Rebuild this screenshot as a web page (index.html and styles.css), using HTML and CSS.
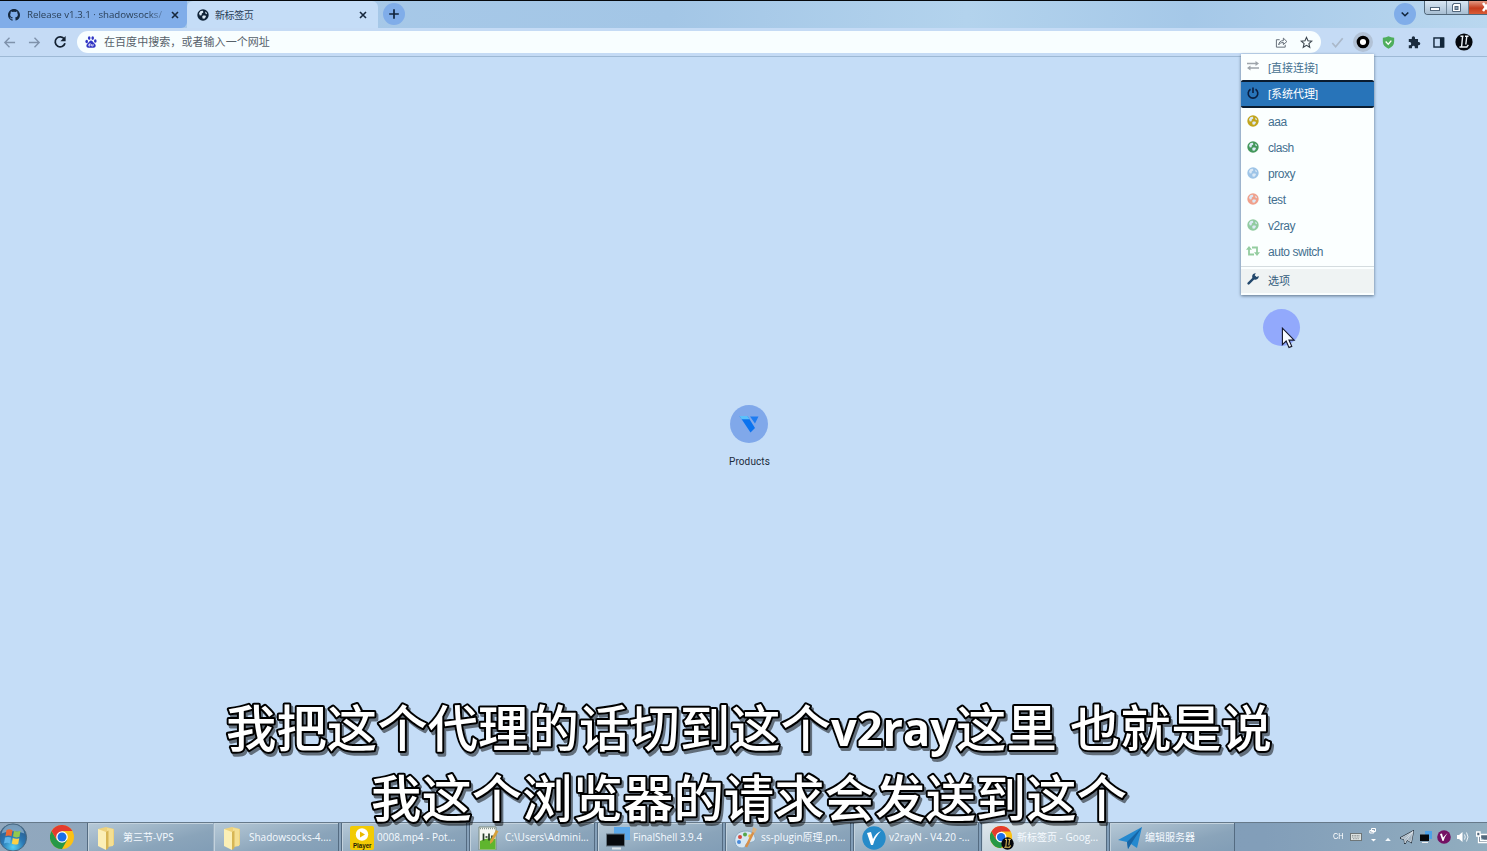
FILE: index.html
```html
<!DOCTYPE html>
<html lang="zh-CN">
<head>
<meta charset="utf-8">
<title>新标签页</title>
<link rel="stylesheet" href="styles.css">
</head>
<body>
<svg class="defs" aria-hidden="true">
  <defs>
    <symbol id="globe" viewBox="0 0 12 12"><circle cx="6" cy="6" r="5.7" fill="currentColor"/><path class="land" d="M2 4.200 3.600 2 6 1.800 6.300 3.400 4.800 4.600 4.600 6.200 2.800 6.400ZM8 2.400 9.800 3.800 9.900 5.200 8.600 4.800ZM6 6.600 8.400 6.500 9 7.800 7.400 9.800 5.600 9.400 5.200 7.600Z"/></symbol>
    <symbol id="close" viewBox="0 0 8 8"><path d="M1 1 7 7M7 1 1 7" stroke="#17283c" stroke-width="1.6"/></symbol>
    <symbol id="folder" viewBox="0 0 20 24"><path d="M2 3 10 1l8 2v16l-8 2-8-2Z" fill="#eed27c"/><path d="M11 2l6 1v17l-6 1Z" fill="#f4df92"/><path d="M2 3 10 6v18l-8-4Z" fill="#fbefb6"/><path d="M10 6l2.500-1.500V22L10 24Z" fill="#d7b654"/></symbol>
    <symbol id="chrome" viewBox="0 0 24 24"><circle cx="12" cy="12" r="12" fill="#fbc116"/><path d="M1.600 6A12 12 0 0 0 12 24L17.200 15 12 12 6.800 15Z" fill="#279847"/><path d="M1.600 6A12 12 0 0 1 22.400 6H12L6.800 15Z" fill="#e33b2e"/><circle cx="12" cy="12" r="5.800" fill="#fff"/><circle cx="12" cy="12" r="4.500" fill="#1b6fe8"/></symbol>
    <symbol id="lbadge" viewBox="0 0 18 18"><circle cx="9" cy="9" r="8.600" fill="#05080d"/><path d="M5.500 3.200h3M7.600 3.200 6.600 13.600M4.400 14h7.400l1.600-2.200M11.800 3.200 10.800 11.500M10 3.200h3.500" stroke="currentColor" stroke-width="1.400" fill="none"/></symbol>
  </defs>
</svg>

<div class="tabstrip">
  <div class="tab tab-back">
    <svg class="github" viewBox="0 0 16 16"><path d="M8 0C3.58 0 0 3.58 0 8c0 3.54 2.29 6.53 5.47 7.59.4.07.55-.17.55-.38v-1.49c-2.23.49-2.69-1.07-2.69-1.07-.36-.92-.89-1.17-.89-1.17-.73-.5.06-.49.06-.49.8.06 1.23.83 1.23.83.71 1.23 1.87.87 2.33.66.07-.52.28-.87.5-1.07-1.77-.2-3.64-.89-3.64-3.95 0-.87.31-1.59.82-2.15-.08-.2-.36-1.02.08-2.12 0 0 .67-.22 2.2.82a7.4 7.4 0 0 1 4 0c1.53-1.04 2.2-.82 2.2-.82.44 1.1.16 1.92.08 2.12.51.56.82 1.27.82 2.15 0 3.07-1.87 3.75-3.65 3.95.29.25.54.73.54 1.48v2.2c0 .21.15.46.55.38A8 8 0 0 0 16 8c0-4.42-3.58-8-8-8Z" fill="#14283f"/></svg>
    <span class="tab-title fade">Release v1.3.1 · shadowsocks/</span>
    <svg class="x"><use href="#close"/></svg>
  </div>
  <div class="tab tab-active">
    <svg class="tab-globe"><use href="#globe"/></svg>
    <span class="tab-title cn">新标签页</span>
    <svg class="x"><use href="#close"/></svg>
  </div>
  <div class="new-tab"><svg viewBox="0 0 22 22"><path d="M11 6.2v9.6M6.2 11h9.6" stroke="#10243c" stroke-width="1.7"/></svg></div>
  <div class="tab-search"><svg viewBox="0 0 22 22"><path d="m7.7 9.5 3.3 3.2 3.3-3.2" stroke="#10243c" stroke-width="1.6" fill="none"/></svg></div>
  <div class="window-buttons">
    <span class="wb"><svg viewBox="0 0 22 13"><rect x="6.500" y="6.500" width="9" height="3" fill="#fff" stroke="#52677c"/></svg></span>
    <span class="wb wb-max"><svg viewBox="0 0 22 13"><path d="M7.500 2.500h7v8h-8v-7h1Z" fill="#fff" stroke="#52677c"/><rect x="9" y="5.500" width="3" height="3" fill="#8aa1b7" stroke="#52677c"/></svg></span>
    <span class="wb wb-close"><svg viewBox="0 0 22 13"><path d="m15 2 6 8m0-8-6 8" stroke="#fff" stroke-width="2.500"/></svg></span>
  </div>
</div>

<div class="toolbar">
  <svg class="nav" viewBox="0 0 14 14"><path d="M13 7H2M7 2 2 7l5 5" stroke="#7f92ab" stroke-width="1.500" fill="none"/></svg>
  <svg class="nav fwd" viewBox="0 0 14 14"><path d="M1 7h11M7 2l5 5-5 5" stroke="#7f92ab" stroke-width="1.500" fill="none"/></svg>
  <svg class="nav reload" viewBox="0 0 14 14"><path d="M11.300 4A5 5 0 1 0 12 8.300" stroke="#132132" stroke-width="1.800" fill="none"/><path d="M12.600 1v5.200H7.400Z" fill="#132132"/></svg>
  <div class="omnibox">
    <svg class="baidu" viewBox="0 0 12 12"><g fill="#3035c4"><ellipse cx="1.700" cy="5.500" rx="1.300" ry="1.700"/><ellipse cx="4.200" cy="2.100" rx="1.300" ry="1.800"/><ellipse cx="7.700" cy="2.100" rx="1.300" ry="1.800"/><ellipse cx="10.300" cy="5" rx="1.300" ry="1.700"/><path d="M6 4.500c1.500 0 2 1.500 3 2.500 1.500 1.300 2 2.200 1.500 3.500-.5 1.500-2.500 1.200-4.500 1.200s-4 .3-4.500-1.200c-.5-1.300.3-2.500 1.500-3.500S4.500 4.500 6 4.500Z"/></g><path d="M5 7v3H3.800V8.500H5M6.600 8v2h1.500V8" stroke="#fff" stroke-width=".7" fill="none"/></svg>
    <span class="placeholder">在百度中搜索，或者输入一个网址</span>
    <svg class="share" viewBox="0 0 14 14"><path d="M5 4H1.500v8h9.500V9.500M4 9.500C4.300 6.500 6 5 9 5V2.300L12.800 6 9 9.200V7C6.500 7 5 7.800 4 9.500Z" stroke="#5c6670" fill="none"/></svg>
    <svg class="star" viewBox="0 0 14 14"><path d="m7 1.500 1.600 3.700 4 .4-3 2.600.9 3.900L7 10l-3.500 2.100.9-3.900-3-2.600 4-.4Z" stroke="#3e4850" stroke-width="1.200" fill="none"/></svg>
  </div>
  <div class="extensions">
    <svg viewBox="0 0 18 18"><path d="m3.500 9.500 3.500 4 7.500-9" stroke="#aab8c9" stroke-width="1.800" fill="none"/></svg>
    <svg class="omega" viewBox="0 0 20 20"><circle cx="10" cy="10" r="10" fill="#b2c2d6"/><circle cx="10" cy="10" r="4.700" fill="#fff" stroke="#000" stroke-width="3.300"/></svg>
    <svg viewBox="0 0 18 18"><path d="M3 4q3.500 0 6-1.500Q11.500 4 15 4v4q0 5-6 7.500Q3 13 3 8Z" fill="#4fae5c"/><path d="m6 8 2.700 2.800L12 7" stroke="#fff" stroke-width="1.400" fill="none"/></svg>
    <svg viewBox="0 0 18 18"><path d="M4 5.200h3.200V4a1.700 1.700 0 0 1 3.400 0v1.200h3.200v3.200h.7a1.700 1.700 0 0 1 0 3.400h-.7V15h-3.400v-1a1.500 1.500 0 0 0-3 0v1H4v-3.200h1a1.600 1.600 0 0 0 0-3.200H4Z" fill="#1a2b3d"/></svg>
    <svg viewBox="0 0 18 18"><rect x="4.200" y="4.200" width="10.200" height="9.600" fill="none" stroke="#12263a" stroke-width="1.500"/><path d="M10.500 4H15v10h-4.500Z" fill="#12263a"/></svg>
    <svg class="avatar"><use href="#lbadge"/></svg>
  </div>
</div>

<main class="newtab">
  <div class="shortcut">
    <svg viewBox="0 0 38 38"><circle cx="19" cy="19" r="19" fill="#80a8ea"/><path d="M9.500 11h8l7.500 12-4.500 4.500Z" fill="#0b73ef"/><path d="M9.500 11h8l2 3.200h-8Z" fill="#5cc0fa"/><path d="M20 11.500h8.500L25 18.500Z" fill="#1e7cf1"/></svg>
    <span>Products</span>
  </div>
</main>

<div class="popup">
  <div class="item"><svg viewBox="0 0 12 12"><path d="M0 3.500h9M3 8h9" stroke="#9da4aa" stroke-width="1.600"/><path d="m8.500 1 3.500 2.500L8.500 6ZM3.500 5.500 0 8l3.500 2.500Z" fill="#9da4aa"/></svg><span>[直接连接]</span></div>
  <div class="item selected"><svg viewBox="0 0 12 12"><path d="M3.500 2.200a4.800 4.800 0 1 0 5 0M6 .5V6" stroke="#0a1f42" stroke-width="1.600" fill="none"/></svg><span>[系统代理]</span></div>
  <div class="item c-aaa"><svg><use href="#globe"/></svg><span>aaa</span></div>
  <div class="item c-clash"><svg><use href="#globe"/></svg><span>clash</span></div>
  <div class="item c-proxy"><svg><use href="#globe"/></svg><span>proxy</span></div>
  <div class="item c-test"><svg><use href="#globe"/></svg><span>test</span></div>
  <div class="item c-v2ray"><svg><use href="#globe"/></svg><span>v2ray</span></div>
  <div class="item"><svg class="retweet" viewBox="0 0 14 12"><path d="M3 4v5.500h5M6 2.500h5V8" stroke="#94cda0" stroke-width="1.800" fill="none"/><path d="M3 1 6 4.800H0ZM11 11 8 7.200h6Z" fill="#94cda0"/></svg><span>auto switch</span></div>
  <div class="item options"><svg viewBox="0 0 12 12"><path d="m1.600 10.400 6-6" stroke="#23486c" stroke-width="2.400" stroke-linecap="round"/><path d="M11.700 3A3.300 3.300 0 1 1 8.800.2L7.700 2.200 9.600 4Z" fill="#23486c"/></svg><span>选项</span></div>
</div>

<div class="pointer"><svg viewBox="0 0 16 24"><path d="M1.500 1v17.500l4-3.800 3 7 3-1.300-3-6.700H14Z" fill="#f8fbff" stroke="#15182a" stroke-width="1.200"/></svg></div>

<footer class="taskbar">
  <svg class="start" viewBox="0 0 29 29"><defs><radialGradient id="orb" cx=".5" cy=".85" r=".8"><stop offset="0" stop-color="#56d0f5"/><stop offset=".5" stop-color="#2b78b4"/><stop offset="1" stop-color="#2c5a88"/></radialGradient></defs><circle cx="13" cy="14.500" r="13.600" fill="url(#orb)" stroke="#46677f"/><path d="M1.500 10.500Q4 1.500 13 1.500T24.500 10.500Q13 6 1.500 10.500Z" fill="#c2dbea" opacity=".5"/><path d="M6.500 7q3-1.500 6 .2l-1 6q-3-1.400-6 0Z" fill="#ea6a35"/><path d="M14 7.800q3 1.500 6.500 0l-1 6q-3.500 1.300-6.500-.2Z" fill="#93c84f"/><path d="M5 14.600q3-1.300 6 0l-1 5.800q-3-1.300-6 .1Z" fill="#5fb6ea"/><path d="M12.800 15q3.200 1.400 6.400.2l-1 5.800q-3.300 1.300-6.400-.2Z" fill="#fdd045"/></svg>
  <svg class="pinned"><use href="#chrome"/></svg>
  <div class="tasks">
    <div class="task joined"><svg class="f"><use href="#folder"/></svg><span>第三节-VPS</span></div>
    <div class="task joined-end"><svg class="f"><use href="#folder"/></svg><span>Shadowsocks-4....</span></div>
    <div class="task"><svg viewBox="0 0 24 24"><rect width="24" height="24" rx="2" fill="#f2cb05"/><circle cx="12" cy="8.500" r="6.200" fill="#fff"/><path d="m10 5.500 5 3-5 3Z" fill="#eab900"/><text x="3" y="22.300" textLength="18.500" lengthAdjust="spacingAndGlyphs" class="player">Player</text></svg><span>0008.mp4 - Pot...</span></div>
    <div class="task"><svg viewBox="0 0 24 24"><path d="M1 1h17v23H1Z" fill="#f5f8f2" stroke="#7b8a80"/><path d="M2 15q7-4 15.500-2v10.500H2Z" fill="#5fb52e"/><path d="M5.500 7.500v7M7.500 11h2M11 7.500v7M14 9.500v5" stroke="#243a25" stroke-width="1.700"/><path d="m12 15 6-11 2.500 1.300-6 10.700-2.500 2Z" fill="#d6a13b"/><path d="M2 2.500h15" stroke="#8c9993" stroke-width="1.500" stroke-dasharray="1 1"/></svg><span>C:\Users\Admini...</span></div>
    <div class="task"><svg viewBox="0 0 24 24"><rect x="8" y="1" width="16" height="13" fill="#5da9eb"/><rect x=".5" y="8" width="18" height="12" fill="#07090d" stroke="#647581"/><path d="M6 22.500h9" stroke="#dfe7ec" stroke-width="2"/></svg><span>FinalShell 3.9.4</span></div>
    <div class="task"><svg viewBox="0 0 24 24"><path d="M12 5C4 5 0 10 1 16q1 6 7 6c5 0 2-4 6-5 7-1 8-3 7-6-1-4-4-6-9-6Z" fill="#d8e7f2" stroke="#8baac2"/><circle cx="6" cy="11" r="2" fill="#d64b42"/><circle cx="11" cy="8.500" r="2" fill="#55a64c"/><circle cx="5" cy="16" r="2" fill="#4889db"/><circle cx="16" cy="10" r="1.800" fill="#e8c13a"/><path d="m12 21 8-16" stroke="#d9904a" stroke-width="2.500"/><path d="m18 6 1-5 4 2-2 4Z" fill="#d8b486"/></svg><span>ss-plugin原理.pn...</span></div>
    <div class="task"><svg viewBox="0 0 24 24"><circle cx="12" cy="12" r="11.700" fill="#268bc9"/><path d="m5 7 4-1 2 7q3-6 8-8-6 6-8 14H9Z" fill="#fff"/></svg><span>v2rayN - V4.20 -...</span></div>
    <div class="task active"><svg viewBox="0 0 26 26"><use href="#chrome" width="24" height="24"/><g color="#e2c15a"><use href="#lbadge" x="12" y="12" width="14" height="14"/></g></svg><span>新标签页 - Goog...</span></div>
    <div class="task"><svg viewBox="0 0 24 24"><path d="M0 14 24 1 19 22l-6-4-3 5-1-7Z" fill="#2589cf"/><path d="m9 16 15-15-11 17-3 5Z" fill="#1765a5"/></svg><span>编辑服务器</span></div>
  </div>
  <div class="tray">
    <span class="lang">CH</span>
    <svg class="kbd" viewBox="0 0 12 8"><rect x=".5" y=".5" width="11" height="7" fill="#dde2e0" stroke="#6e7678"/><path d="M2 2.500h8M2 4h8M3 5.700h6" stroke="#7c8385" stroke-width=".8" stroke-dasharray="1 .6"/></svg>
    <svg class="restore" viewBox="0 0 8 16"><path d="M2.500 1.500h4v3h-4ZM.8 3.500h4v2.500h-4Z" fill="#8da1b5" stroke="#fff"/><path d="M2 12h5l-2.500 2.500Z" fill="#fff"/></svg>
    <svg class="up" viewBox="0 0 7 5"><path d="M0 5h7L3.500 1Z" fill="#f2f8fc"/></svg>
    <svg class="plane" viewBox="0 0 14 14"><path d="M1 8 13 1.500l-2 10.500-4-2.500L5 13 4.500 9ZM4.500 9 13 1.500 7 9.500" fill="none" stroke="#26313c" stroke-width="2"/><path d="M1 8 13 1.500l-2 10.500-4-2.500L5 13 4.500 9ZM4.500 9 13 1.500 7 9.500" fill="#a6b6c3" stroke="#e3eaf0" stroke-width=".7"/></svg>
    <svg class="screen" viewBox="0 0 14 14"><path d="M6 1h7v8H6Z" fill="#4da1e8"/><path d="M1 4.500h9v6.500H1Z" fill="#05080c"/><path d="M3 12.500h6" stroke="#eee"/></svg>
    <svg class="vtray" viewBox="0 0 14 14"><circle cx="7" cy="7" r="6.800" fill="#741164"/><path d="m3 4 2-.5L6 7.500 10.500 3Q7.500 7 6.500 11h-1Z" fill="#fff"/></svg>
    <svg class="sound" viewBox="0 0 14 14"><path d="M1 5h2l3.500-3v10L3 9H1Z" fill="#fff"/><path d="M8.500 4.500q1.500 2.500 0 5M10.500 2.500q3 4.500 0 9" stroke="#edf4f8" fill="none"/></svg>
    <svg class="net" viewBox="0 0 11 14"><path d="M4.500 4.500H12v6H4.500ZM.6 2h3.400v4H.6ZM2.500 6v6.500H12" stroke="#fff" stroke-width="1.300" fill="#53687d"/></svg>
  </div>
</footer>

<svg class="subtitles" viewBox="0 0 1487 160">
  <g class="lines">
    <text x="226" y="56" textLength="605">我把这个代理的话切到这个</text>
    <text x="831" y="55" textLength="125" lengthAdjust="spacingAndGlyphs" class="latin">v2ray</text>
    <text x="956" y="56" textLength="101">这里</text>
    <text x="1070" y="56" textLength="202">也就是说</text>
    <text x="371" y="126" textLength="756">我这个浏览器的请求会发送到这个</text>
  </g>
</svg>
</body>
</html>
```
FILE: styles.css
```css
* { box-sizing: border-box; }
body {
  margin: 0; width: 1487px; height: 851px; overflow: hidden; position: relative;
  display: flex; flex-direction: column; background: #c5ddf7;
  font-family: "Open Sans", "Noto Sans CJK SC", sans-serif; font-size: 10px; color: #2a4058;
}
svg { display: block; flex: none; }
.defs { position: absolute; width: 0; height: 0; }
.land { fill: #dbe9f6; }

.tabstrip {
  height: 28px; display: flex; flex: none; border-top: 1px solid #05080c;
  background: linear-gradient(90deg, #abcbea, #a3c6e6 45%, #b3d3ed 65%, #a5c8e8 80%, #b9d7ef);
}
.tab { display: flex; align-items: center; height: 27px; }
.tab-back { width: 187px; padding: 0 7px 0 8px; background: #80ade9; border-radius: 0 0 6px 0; }
.github { width: 12px; height: 12px; margin-right: 7px; }
.tab-title { white-space: nowrap; }
.fade { width: 137px; font-size: 9.7px; margin-right: 7px; -webkit-mask-image: linear-gradient(90deg, #000 88%, rgba(0,0,0,.3)); mask-image: linear-gradient(90deg, #000 88%, rgba(0,0,0,.3)); }
.cn { flex: 1; font-size: 10px; letter-spacing: -.4px; }
.tab-active { width: 191px; padding: 0 11px 0 10px; background: #c5ddf7; border-radius: 6px 6px 0 0; }
.tab-globe { width: 12px; height: 12px; margin-right: 6px; color: #102337; }
.x { width: 8px; height: 8px; }
.new-tab, .tab-search { width: 22px; height: 22px; border-radius: 50%; background: #80ade9; margin-top: 2px; }
.new-tab { margin-left: 5px; }
.tab-search { margin-left: auto; }
.window-buttons { display: flex; width: 63px; height: 14px; margin-left: 8px; border: 1px solid #516779; border-width: 0 0 1px 1px; border-radius: 0 0 0 4px; overflow: hidden; }
.wb { width: 22px; background: linear-gradient(#d9e7f3, #a7bed3); border-right: 1px solid #708699; }
.wb-close { background: linear-gradient(#e49a84, #c53c1d 55%, #d95c36); border: 0; }
.wb svg { width: 22px; height: 13px; margin-left: -1px; }

.toolbar { height: 29px; flex: none; display: flex; align-items: center; background: #c5dbf5; border-bottom: 1px solid #9eb9d5; padding-left: 3px; }
.nav { width: 13px; height: 13px; }
.fwd { margin-left: 12px; }
.reload { margin-left: 12px; width: 14px; height: 14px; }
.omnibox { width: 1244px; height: 22px; margin-left: 10px; border-radius: 11px; background: #f8feff; display: flex; align-items: center; padding: 0 8px; }
.baidu { width: 12px; height: 12px; margin-right: 7px; }
.placeholder { flex: 1; font-size: 11px; letter-spacing: .06px; margin-top: -2px; color: #56616a; font-family: "Noto Sans CJK SC", sans-serif; }
.share { width: 13px; height: 13px; margin-right: 12px; }
.star { width: 13px; height: 13px; }
.extensions { display: flex; align-items: center; gap: 8px; margin-left: 8px; }
.extensions svg { width: 17px; height: 17px; }
.extensions .omega { width: 20px; height: 20px; margin: 0 -1px; }
.extensions .avatar { width: 18px; height: 18px; color: #edf3f8; }

.newtab { flex: 1; display: flex; justify-content: center; padding: 348px 0 0 12px; }
.shortcut { display: flex; flex-direction: column; align-items: center; width: 42px; font: 10px Roboto, sans-serif; letter-spacing: .12px; color: #1c2b3a; }
.shortcut svg { width: 38px; height: 38px; margin: 0 1px 13px 0; }

.popup {
  position: absolute; left: 1241px; top: 54px; width: 133px; height: 241px; background: #fbffff;
  box-shadow: 0 1px 3px #5d7288; font: 12px "Liberation Sans", "Noto Sans CJK SC", sans-serif; color: #44708f;
}
.item { display: flex; align-items: center; height: 26px; padding-left: 6px; }
.item svg { width: 12px; height: 12px; margin: -2px 9px 0 0; }
.item span { letter-spacing: -.45px; }
.item .retweet { width: 14px; margin-left: -1px; margin-right: 8px; }
.item:nth-child(-n+2) span, .options span { font-size: 11px; letter-spacing: 0; margin-top: -1px; }
.popup .selected { height: 28px; margin-bottom: 1px; background: #2874b9; border: 1px solid #0a1c30; border-width: 2px 0; border-radius: 2px; color: #fff; }
.selected svg { margin-top: -3px; }
.item.selected span { margin-top: -3px; }
.popup .land { fill: #fbffff; }
.c-aaa svg { color: #c2a51c; }
.c-clash svg { color: #44985b; }
.c-proxy svg { color: #9dc4e7; }
.c-test svg { color: #f0a18c; }
.c-v2ray svg { color: #91cba0; }
.popup .options { height: 27px; border-top: 1px solid #d4dcdf; margin-top: 1px; background: linear-gradient(#fbffff 2px, #eff3f3 2px); color: #345c7c; }

.pointer { position: absolute; left: 1263px; top: 309px; width: 37px; height: 37px; border-radius: 50%; background: #92a9fc; padding: 18px 0 0 18px; }
.pointer svg { width: 15px; height: 23px; }

.taskbar { flex: none; height: 29px; display: flex; overflow: hidden; border-top: 1px solid #66798a; background: linear-gradient(90deg, #91a8be, #819db7 50%, #829eb9 85%, #91adbf); }
.start { width: 29px; height: 29px; }
.pinned { width: 24px; height: 24px; margin: 2px 0 0 21px; }
.tasks { display: flex; gap: 2px; margin-left: 13px; }
.task {
  width: 126px; height: 29px; display: flex; align-items: center; padding-left: 8px; white-space: nowrap;
  border: 1px solid #546b81; border-width: 0 1px; box-shadow: inset 1px 1px #c3d2dd; color: #f5faff;
  background: linear-gradient(165deg, #b6c9d7, #8aa4ba 65%, #819db6); font-size: 10px;
}
.task svg { width: 24px; height: 24px; margin-right: 3px; }
.task svg.f { width: 20px; margin-right: 7px; }
.task span { margin-top: -2px; }
.joined { margin-right: -2px; border-right: 0; }
.joined-end { border-left-color: #9db2c4; }
.active { background: linear-gradient(160deg, #dfe8ed, #b9c9d4 65%, #afc0cf); }
.player { font: bold 7px "Liberation Sans", sans-serif; fill: #231b04; }
.tray { display: flex; align-items: center; margin-left: auto; color: #fff; font: 9px "Liberation Sans", sans-serif; }
.lang { width: 17px; margin-top: -2px; transform-origin: left; transform: scaleX(.82); }
.kbd { width: 12px; height: 8px; }
.restore { width: 8px; height: 16px; margin: -4px 0 0 7px; }
.up { width: 6px; height: 4px; margin-left: 8px; margin-top: 3px; }
.plane { width: 14px; height: 14px; margin-left: 9px; }
.screen { width: 14px; height: 14px; margin-left: 5px; }
.vtray { width: 14px; height: 14px; margin-left: 4px; }
.sound { width: 14px; height: 14px; margin-left: 5px; }
.net { width: 11px; height: 14px; margin-left: 6px; }

.subtitles { position: absolute; left: 0; top: 691px; width: 1487px; height: 160px; }
.subtitles text { font: 500 50.4px "Noto Sans CJK SC", sans-serif; }
.subtitles .latin { font: bold 47px "Open Sans", sans-serif; }
.lines { stroke: #000; stroke-width: 4px; stroke-linejoin: round; paint-order: stroke; fill: #fff; filter: drop-shadow(2.5px 3px 0 rgba(0, 0, 0, .5)); }
```
